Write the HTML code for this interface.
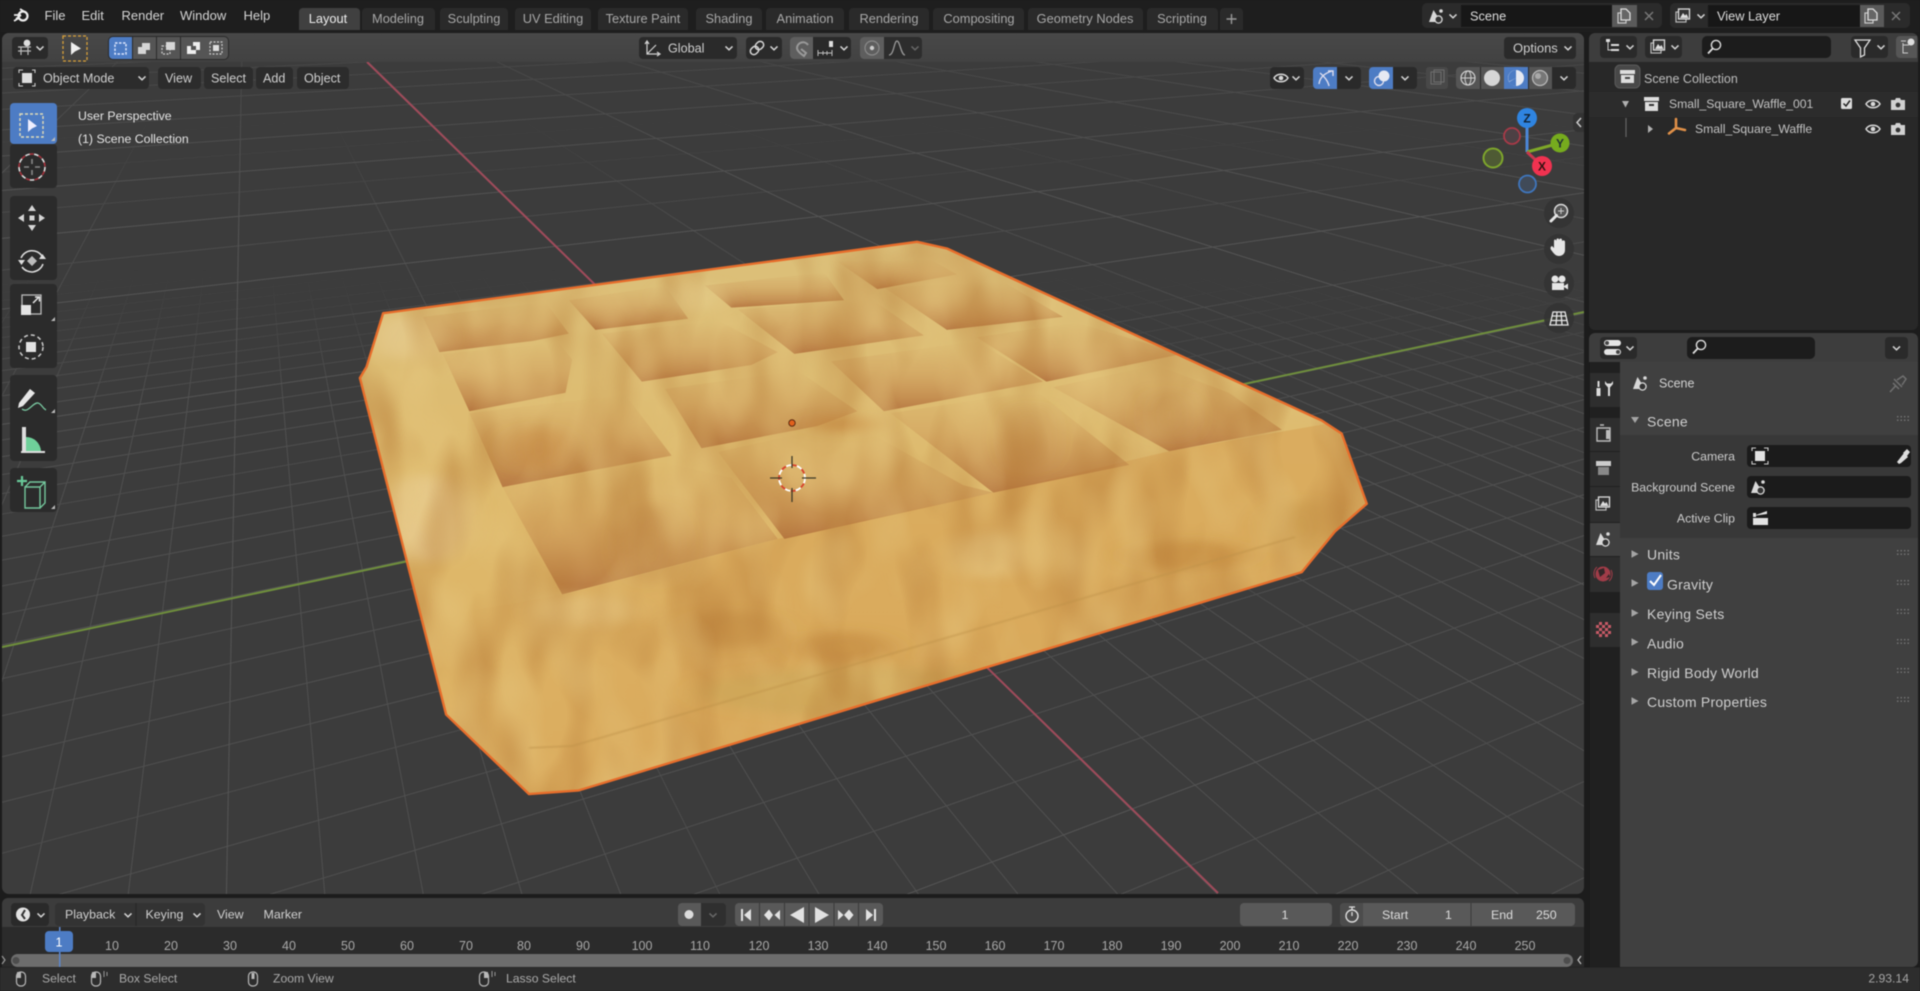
<!DOCTYPE html>
<html><head><meta charset="utf-8"><title>Blender</title>
<style>
html,body{margin:0;padding:0;background:#1b1b1b;width:1920px;height:991px;overflow:hidden}
svg{display:block;filter:blur(.45px)}
text{font-family:"Liberation Sans","DejaVu Sans",sans-serif;font-size:13px;fill:#d4d4d4}
.m{text-anchor:middle}.e{text-anchor:end}
.tab{fill:#a8a8a8;font-size:12.8px}
.hd{fill:#cfcfcf;font-size:12.6px}
.pn{fill:#cfcfcf;font-size:14px;letter-spacing:.25px}
.rl{fill:#a9a9a9;font-size:12.5px}
.k{fill:#2a2a2a}.g{fill:#555}
.f{fill:#d6d6d6}
</style></head><body>
<svg xmlns="http://www.w3.org/2000/svg" width="1920" height="991" viewBox="0 0 1920 991">
<defs>
<path id="chev" d="M-3.5-1.6 0 1.8 3.5-1.6" fill="none" stroke="#d2d2d2" stroke-width="1.5"/>
<g id="eye"><path d="M-7 0C-4-5 4-5 7 0 4 5-4 5-7 0Z" fill="none" stroke="#d8d8d8" stroke-width="1.5"/><circle r="2.3" fill="#d8d8d8"/></g>
<g id="cam"><path d="M-7-4H-3L-2-6H2L3-4H7V6H-7Z" fill="#d0d0d0"/><circle cy="1" r="2.4" fill="#333"/></g>
<g id="scn"><path d="M-7 6-2.5-6 2 1-1 6Z" fill="#d8d8d8"/><circle cx="2.5" cy="3.5" r="3.6" fill="#333" stroke="#d8d8d8" stroke-width="1.3"/><circle cx="5" cy="-5" r="1.8" fill="#d8d8d8"/></g>
<g id="lay"><rect x="-7" y="-4" width="10" height="10" fill="none" stroke="#bbb" stroke-width="1.2"/><rect x="-4.5" y="-7" width="11" height="10" fill="#333" stroke="#ddd" stroke-width="1.3"/><path d="M-3 2 0-3 2-.5 3.5-2 5.5 2Z" fill="#ddd"/></g>
<g id="cop"><rect x="-6" y="-3" width="8" height="10" fill="none" stroke="#ccc" stroke-width="1.2"/><path d="M-3-7H2L6-3V4H-3Z" fill="#666" stroke="#ddd" stroke-width="1.3"/></g>
<g id="mag"><circle cx="2" cy="-2" r="4.6" fill="none" stroke="#ddd" stroke-width="1.4"/><path d="M-1.2 1.4-6 6.5" stroke="#ddd" stroke-width="1.8"/></g>
<g id="mouse"><rect x="-4.5" y="-7" width="9" height="14" rx="4" fill="none" stroke="#b8b8b8" stroke-width="1.2"/></g>
<g id="grip" fill="#777"><rect x="0" y="0" width="1.4" height="1.4"/><rect x="3.5" y="0" width="1.4" height="1.4"/><rect x="7" y="0" width="1.4" height="1.4"/><rect x="10.500" y="0" width="1.4" height="1.4"/><rect x="0" y="3.500" width="1.4" height="1.4"/><rect x="3.5" y="3.500" width="1.4" height="1.4"/><rect x="7" y="3.500" width="1.4" height="1.4"/><rect x="10.500" y="3.500" width="1.400" height="1.4"/></g>
<path id="tri" d="M-3.500-3.800 3.500 0-3.500 3.800Z" fill="#a5a5a5"/>
<clipPath id="vp"><rect x="2" y="33" width="1582" height="861" rx="7"/></clipPath>
<clipPath id="wc"><polygon transform="translate(340 230) scale(.6633 .3699)" points="65,225 870,32 915,50 1480,515 1510,550 1548,740 1500,815 1450,925 360,1515 285,1525 160,1310 30,400 40,370"/></clipPath>
<linearGradient id="hdg" x1="0" y1="0" x2="0" y2="1"><stop offset="0" stop-color="#484848"/><stop offset="1" stop-color="#424242"/></linearGradient>
<linearGradient id="mf" gradientUnits="userSpaceOnUse" x1="0" y1="270" x2="0" y2="400"><stop offset="0" stop-color="#000"/><stop offset="1" stop-color="#fff"/></linearGradient>
<mask id="mm" maskUnits="userSpaceOnUse" x="0" y="0" width="1920" height="991"><rect width="1920" height="991" fill="url(#mf)"/></mask>
<linearGradient id="mf2" gradientUnits="userSpaceOnUse" x1="0" y1="110" x2="0" y2="220"><stop offset="0" stop-color="#000"/><stop offset="1" stop-color="#fff"/></linearGradient>
<mask id="mm2" maskUnits="userSpaceOnUse" x="0" y="0" width="1920" height="991"><rect width="1920" height="991" fill="url(#mf2)"/></mask>
<linearGradient id="topf" x1="0" y1="0" x2="0" y2="1"><stop offset="0" stop-color="#3c3c3c" stop-opacity=".55"/><stop offset="1" stop-color="#3c3c3c" stop-opacity="0"/></linearGradient>
<linearGradient id="wb" x1="0" y1="0" x2="0" y2="1"><stop offset="0" stop-color="#dcc07a"/><stop offset=".5" stop-color="#dfba6c"/><stop offset="1" stop-color="#dcae60"/></linearGradient>
<linearGradient id="wl" x1="0" y1="0" x2="0" y2="1"><stop offset="0" stop-color="#c68a4e" stop-opacity="0"/><stop offset=".4" stop-color="#c68a4e" stop-opacity=".3"/><stop offset=".8" stop-color="#bb7d44" stop-opacity=".7"/><stop offset="1" stop-color="#b3723e" stop-opacity=".92"/></linearGradient>
<linearGradient id="ff" x1="0" y1="0" x2="1" y2="0"><stop offset="0" stop-color="#d8a658" stop-opacity="0"/><stop offset=".3" stop-color="#d8a658" stop-opacity=".7"/></linearGradient>
<filter id="bl" x="-30%" y="-30%" width="160%" height="160%"><feGaussianBlur stdDeviation="22 13"/></filter>
<filter id="bs" x="-10%" y="-10%" width="120%" height="120%"><feGaussianBlur stdDeviation="1.6"/></filter>
<filter id="md" x="0" y="0" width="1" height="1" color-interpolation-filters="sRGB"><feTurbulence type="fractalNoise" baseFrequency=".022 .009" numOctaves="2" seed="7"/><feColorMatrix values="0 0 0 0 .70  0 0 0 0 .46  0 0 0 0 .20  1.2 0 0 0 -.49"/></filter>
<filter id="ml" x="0" y="0" width="1" height="1" color-interpolation-filters="sRGB"><feTurbulence type="fractalNoise" baseFrequency=".02 .012" numOctaves="2" seed="23"/><feColorMatrix values="0 0 0 0 .90  0 0 0 0 .78  0 0 0 0 .50  0 1.2 0 0 -.53"/></filter>
</defs>

<rect width="1920" height="991" fill="#1c1c1c"/>

<!-- 3D viewport -->
<g clip-path="url(#vp)">
<rect x="2" y="33" width="1582" height="861" fill="#3c3c3c"/>
<g id="gmin" stroke="#505050" stroke-width="1" mask="url(#mm)"></g>
<g id="gmid" stroke="#4c4c4c" stroke-width="1" mask="url(#mm2)"></g>
<g id="gmaj" stroke="#555" stroke-width="1"></g>
<rect x="2" y="62" width="1582" height="150" fill="url(#topf)"/>
<path d="M367 62 1218 893" stroke="#a04a5a" stroke-width="2"/>
<path d="M0 647.500 1584 312" stroke="#6f8f3c" stroke-width="2"/>

<!-- waffle -->
<polygon transform="translate(340 230) scale(.6633 .3699)" points="65,225 870,32 915,50 1480,515 1510,550 1548,740 1500,815 1450,925 360,1515 285,1525 160,1310 30,400 40,370" fill="url(#wb)"/>
<g clip-path="url(#wc)">
<g transform="translate(340 230) scale(.6633 .3699)">
 <polygon points="160,1040 340,985 660,835 985,710 1250,598 1500,520 1548,740 1450,925 360,1515 285,1525 160,1310" fill="url(#ff)"/>
 <g fill="url(#wl)">
 <polygon points="245,695 480,625 590,670 660,835 335,985"/>
 <polygon points="570,600 720,540 790,540 940,690 985,710 670,835"/>
 <polygon points="830,495 1050,435 1190,635 985,710"/>
 <polygon points="1075,425 1230,365 1340,440 1420,540 1250,598"/>
 <polygon points="195,495 430,445 500,610 245,695"/>
 <polygon points="490,430 690,380 780,490 720,530 545,590"/>
 <polygon points="740,355 960,300 1060,410 820,490"/>
 <polygon points="960,290 1110,250 1270,335 1065,410"/>
 <polygon points="155,335 330,305 350,350 340,440 195,490"/>
 <polygon points="395,280 570,245 660,330 620,365 455,410"/>
 <polygon points="600,215 800,185 880,285 685,335"/>
 <polygon points="820,155 1000,140 1090,235 915,270"/>
 <polygon points="125,235 310,195 345,280 290,300 150,330"/>
 <polygon points="345,190 490,150 525,240 385,270"/>
 <polygon points="550,150 730,115 760,190 590,210"/>
 <polygon points="750,85 890,80 930,120 810,160"/>
 </g>
 <g filter="url(#bl)">
  <ellipse cx="130" cy="780" rx="60" ry="120" fill="#edd6a4" opacity=".55"/>
  <ellipse cx="95" cy="290" rx="45" ry="60" fill="#e8cf96" opacity=".6"/>
  <ellipse cx="370" cy="1030" rx="70" ry="40" fill="#ebcf92" opacity=".4"/>
  <ellipse cx="980" cy="880" rx="60" ry="60" fill="#e8cf92" opacity=".4"/>
  <ellipse cx="535" cy="180" rx="35" ry="40" fill="#e8d292" opacity=".6"/>
  <ellipse cx="760" cy="1130" rx="70" ry="45" fill="#bd8238" opacity=".5"/>
  <ellipse cx="590" cy="1080" rx="70" ry="50" fill="#c08a40" opacity=".45"/>
  <ellipse cx="1280" cy="880" rx="90" ry="40" fill="#bf8438" opacity=".5"/>
  <ellipse cx="1450" cy="800" rx="50" ry="70" fill="#c89a4a" opacity=".45"/>
  <ellipse cx="300" cy="590" rx="40" ry="60" fill="#c88a42" opacity=".5"/>
  <ellipse cx="760" cy="525" rx="50" ry="22" fill="#c98c44" opacity=".65"/>
  <ellipse cx="470" cy="850" rx="36" ry="110" fill="#bd8648" opacity=".45"/>
  <ellipse cx="1040" cy="560" rx="25" ry="90" fill="#bd8648" opacity=".4"/>
  <ellipse cx="1250" cy="500" rx="25" ry="70" fill="#b98040" opacity=".45"/>
  <ellipse cx="800" cy="1250" rx="260" ry="70" fill="#c8a558" opacity=".5"/>
 </g>
</g>
<rect x="340" y="230" width="1040" height="580" filter="url(#md)" fill="#000"/>
<rect x="340" y="230" width="1040" height="580" filter="url(#ml)" fill="#000"/>
</g>
<g transform="translate(340 230) scale(.6633 .3699)" fill="none">
 <path d="M285 1400 350 1395 1440 830" stroke="#bd9148" stroke-width="2" vector-effect="non-scaling-stroke" opacity=".45" filter="url(#bs)"/>
 <polygon points="65,225 870,32 915,50 1480,515 1510,550 1548,740 1500,815 1450,925 360,1515 285,1525 160,1310 30,400 40,370" stroke="#e76d2b" stroke-width="2.4" vector-effect="non-scaling-stroke" stroke-linejoin="round"/>
</g>
<!-- origin + 3d cursor -->
<circle cx="792" cy="423" r="3.2" fill="#e2611c" stroke="#5a2a10" stroke-width="1"/>
<circle cx="792" cy="478" r="13" fill="none" stroke="#fff" stroke-width="1.8" stroke-dasharray="6 5"/>
<circle cx="792" cy="478" r="13" fill="none" stroke="#d8402c" stroke-width="1.8" stroke-dasharray="5 6" stroke-dashoffset="5.500"/>
<path d="M792 456V468M792 488V502M770 478H782M802 478H816" stroke="#3c3a28" stroke-width="1.300"/>
</g>

<!-- viewport header -->
<path d="M2 62V40a7 7 0 0 1 7-7H1577a7 7 0 0 1 7 7V62Z" fill="url(#hdg)"/>

<!-- topbar -->
<rect width="1920" height="32" fill="#1e1e1e"/>
<g transform="translate(22 16)"><circle cx="1" r="4.500" fill="none" stroke="#ededed" stroke-width="2.200"/><path d="M-8-1H-1M-6 3-1-1M-8 5-3 2M-2-7 3-4" stroke="#ededed" stroke-width="1.800" fill="none"/></g>
<text x="44.500" y="20">File</text><text x="81.500" y="20">Edit</text><text x="121.500" y="20">Render</text><text x="180" y="20">Window</text><text x="243.500" y="20">Help</text>
<path d="M299 30V12a4 4 0 0 1 4-4H356a4 4 0 0 1 4 4V30Z" fill="#404040"/>
<g fill="#2a2a2a">
<path d="M362 30V12a4 4 0 0 1 4-4H431a4 4 0 0 1 4 4V30Z"/>
<path d="M440 30V12a4 4 0 0 1 4-4H504a4 4 0 0 1 4 4V30Z"/>
<path d="M515 30V12a4 4 0 0 1 4-4H587a4 4 0 0 1 4 4V30Z"/>
<path d="M598 30V12a4 4 0 0 1 4-4H684a4 4 0 0 1 4 4V30Z"/>
<path d="M696 30V12a4 4 0 0 1 4-4H758a4 4 0 0 1 4 4V30Z"/>
<path d="M766 30V12a4 4 0 0 1 4-4H840a4 4 0 0 1 4 4V30Z"/>
<path d="M849 30V12a4 4 0 0 1 4-4H925a4 4 0 0 1 4 4V30Z"/>
<path d="M933 30V12a4 4 0 0 1 4-4H1020a4 4 0 0 1 4 4V30Z"/>
<path d="M1028 30V12a4 4 0 0 1 4-4H1139a4 4 0 0 1 4 4V30Z"/>
<path d="M1147 30V12a4 4 0 0 1 4-4H1214a4 4 0 0 1 4 4V30Z"/>
<path d="M1220 30V12a4 4 0 0 1 4-4H1239a4 4 0 0 1 4 4V30Z"/>
</g>
<text class="tab m" x="328" y="23" style="fill:#eee">Layout</text>
<text class="tab m" x="398" y="23">Modeling</text>
<text class="tab m" x="474" y="23">Sculpting</text>
<text class="tab m" x="553" y="23">UV Editing</text>
<text class="tab m" x="643" y="23">Texture Paint</text>
<text class="tab m" x="729" y="23">Shading</text>
<text class="tab m" x="805" y="23">Animation</text>
<text class="tab m" x="889" y="23">Rendering</text>
<text class="tab m" x="979" y="23">Compositing</text>
<text class="tab m" x="1085" y="23">Geometry Nodes</text>
<text class="tab m" x="1182" y="23">Scripting</text>
<path d="M1231.500 14V24M1226.500 19H1236.500" stroke="#999" stroke-width="1.400"/>

<!-- scene selector -->
<rect x="1422" y="3" width="240" height="25" rx="5" fill="#2b2b2b"/>
<rect x="1461" y="5" width="151" height="22" fill="#171717"/>
<rect x="1612" y="5" width="25" height="22" fill="#5a5a5a"/>
<use href="#scn" x="1436" y="16"/><use href="#chev" x="1453" y="16"/>
<text x="1470" y="20.500" style="fill:#ddd;font-size:12.800px">Scene</text>
<use href="#cop" x="1624" y="16"/>
<path d="M1645 12 1653 20M1653 12 1645 20" stroke="#777" stroke-width="1.500"/>
<rect x="1670" y="3" width="240" height="25" rx="5" fill="#2b2b2b"/>
<rect x="1708" y="5" width="152" height="22" fill="#171717"/>
<rect x="1860" y="5" width="24" height="22" fill="#5a5a5a"/>
<use href="#lay" x="1683" y="16"/><use href="#chev" x="1701" y="16"/>
<text x="1717" y="20.500" style="fill:#ddd;font-size:12.800px">View Layer</text>
<use href="#cop" x="1871" y="16"/>
<path d="M1892 12 1900 20M1900 12 1892 20" stroke="#777" stroke-width="1.500"/>

<!-- header row 1 -->
<rect x="12" y="37" width="36" height="22" rx="4" class="k"/>
<g transform="translate(25 48)"><path d="M-7 3H6M-7-1H6M-4-1V7M3-1V7" stroke="#bbb" stroke-width="1.200" fill="none"/><circle cx="2" cy="-5" r="3.400" fill="#ddd"/></g>
<use href="#chev" x="40" y="48"/>
<rect x="63" y="36" width="24" height="25" fill="none" stroke="#d8a03a" stroke-width="1.300" stroke-dasharray="3 2"/>
<path d="M71 42V55L75 51.500 81 48.500Z" fill="#eee"/>
<rect x="108" y="36" width="121" height="24" rx="5" fill="#2a2a2a"/>
<path d="M109 41a4 4 0 0 1 4-4H132V59H113a4 4 0 0 1-4-4Z" fill="#4d7cc4"/>
<rect x="133" y="37" width="23" height="22" class="g"/><rect x="157" y="37" width="23" height="22" class="g"/><rect x="181" y="37" width="23" height="22" class="g"/>
<path d="M204 37H224a4 4 0 0 1 4 4V55a4 4 0 0 1-4 4H204Z" class="g"/>
<rect x="115" y="43" width="11" height="11" fill="none" stroke="#dfe8ff" stroke-width="1.400" stroke-dasharray="2.500 1.500"/>
<path d="M138 54V47H142V43H150V50H146V54Z" class="f"/>
<rect x="162" y="46" width="8" height="8" fill="none" stroke="#ccc" stroke-width="1.200" stroke-dasharray="2 1.500"/><rect x="166" y="42" width="9" height="8" class="f"/>
<path d="M187 46h6v-4h7v8h-4v4h-9Z" fill="#eee"/><rect x="191" y="46" width="5" height="4" fill="#555"/>
<rect x="210" y="42" width="12" height="12" fill="none" stroke="#ccc" stroke-width="1.200" stroke-dasharray="2 1.500"/><rect x="213" y="45" width="6" height="6" fill="#ddd"/>

<rect x="639" y="37" width="98" height="22" rx="4" class="k"/>
<g stroke="#d0d0d0" fill="none" stroke-width="1.200"><path d="M647 42V54H659M647 54 656 45M645 44 647 41 649 44M657 52 660 54 657 56"/></g>
<text x="668" y="52.500" class="hd">Global</text><use href="#chev" x="729" y="48"/>
<rect x="746" y="37" width="36" height="22" rx="4" class="k"/>
<g transform="translate(757 48) rotate(-45)" fill="none" stroke="#d6d6d6" stroke-width="1.500"><rect x="-8" y="-3.500" width="9" height="7" rx="3.500"/><rect x="-1" y="-3.500" width="9" height="7" rx="3.500"/></g><use href="#chev" x="774" y="48"/>
<rect x="790" y="37" width="61" height="22" rx="4" class="k"/>
<path d="M790 41a4 4 0 0 1 4-4H813V59H794a4 4 0 0 1-4-4Z" fill="#5e5e5e"/>
<path d="M797 48a6 6 0 0 1 11-3M797 48c0 3 4 6 7 8l2-3-5-4" fill="none" stroke="#999" stroke-width="2"/>
<path d="M818 53H832M818 50V56M832 50V56M823 51V55M827 51V55" stroke="#bbb"/><rect x="829" y="41" width="4" height="6" fill="#ddd"/>
<use href="#chev" x="844" y="48"/>
<rect x="860" y="37" width="62" height="22" rx="4" fill="#2d2d2d"/>
<path d="M860 41a4 4 0 0 1 4-4H884V59H864a4 4 0 0 1-4-4Z" fill="#5e5e5e"/>
<circle cx="872" cy="48" r="7" fill="none" stroke="#8a8a8a" stroke-width="1.200"/><circle cx="872" cy="48" r="2.200" fill="#ccc"/>
<path d="M889 55C894 55 894 41 897 41 900 41 901 55 905 55" fill="none" stroke="#999" stroke-width="1.300"/>
<use href="#chev" x="915" y="48" opacity=".35"/>
<rect x="1504" y="37" width="72" height="22" rx="4" class="k"/>
<text x="1513" y="52.500" style="fill:#cfcfcf">Options</text><use href="#chev" x="1568" y="48"/>

<!-- header row 2 -->
<g fill="#2c2c2c">
<rect x="13" y="67" width="136" height="22" rx="4"/><rect x="158" y="67" width="43" height="22" rx="4"/><rect x="204" y="67" width="49" height="22" rx="4"/><rect x="256" y="67" width="37" height="22" rx="4"/><rect x="297" y="67" width="52" height="22" rx="4"/>
</g>
<rect x="22" y="73" width="10" height="10" fill="#ddd"/><path d="M19 73V70H23M32 70H35V73M35 83V86H32M23 86H19V83" fill="none" stroke="#ccc" stroke-width="1.100"/>
<text x="43" y="82.500" class="hd">Object Mode</text><use href="#chev" x="142" y="78"/>
<text x="165" y="82.500" class="hd">View</text><text x="211" y="82.500" class="hd">Select</text><text x="263" y="82.500" class="hd">Add</text><text x="304" y="82.500" class="hd">Object</text>

<rect x="1270" y="67" width="34" height="22" rx="4" class="k"/><use href="#eye" x="1281" y="78"/><use href="#chev" x="1296" y="78"/>
<rect x="1313" y="67" width="48" height="22" rx="4" class="k"/>
<path d="M1313 71a4 4 0 0 1 4-4H1337V89H1317a4 4 0 0 1-4-4Z" fill="#4d7cc4"/>
<path d="M1319 84C1320 76 1326 73 1332 71M1328 71H1333V76M1320 73C1324 76 1328 81 1329 86" fill="none" stroke="#dde" stroke-width="1.400"/><use href="#chev" x="1349" y="78"/>
<rect x="1369" y="67" width="48" height="22" rx="4" class="k"/>
<path d="M1369 71a4 4 0 0 1 4-4H1393V89H1373a4 4 0 0 1-4-4Z" fill="#4d7cc4"/>
<circle cx="1379" cy="81" r="4.500" fill="none" stroke="#dde" stroke-width="1.400"/><circle cx="1384" cy="76" r="5.500" fill="#e6e9f2"/><use href="#chev" x="1405" y="78"/>
<rect x="1426" y="67" width="22" height="22" rx="3" fill="#484848"/><rect x="1431" y="72" width="10" height="12" fill="none" stroke="#6e6e6e"/><rect x="1434" y="70" width="10" height="12" fill="none" stroke="#6e6e6e"/>
<rect x="1456" y="67" width="120" height="22" rx="4" class="k"/>
<path d="M1456 71a4 4 0 0 1 4-4H1480V89H1460a4 4 0 0 1-4-4Z" class="g"/><rect x="1481" y="67" width="23" height="22" class="g"/><rect x="1504" y="67" width="24" height="22" fill="#4d7cc4"/><rect x="1529" y="67" width="23" height="22" class="g"/>
<circle cx="1468" cy="78" r="7" fill="none" stroke="#cfcfcf" stroke-width="1.200"/><ellipse cx="1468" cy="78" rx="3" ry="7" fill="none" stroke="#cfcfcf"/><path d="M1461 78H1475" stroke="#cfcfcf"/>
<circle cx="1492" cy="78" r="8" fill="#d6d6d6"/>
<circle cx="1516" cy="78" r="8" fill="#e6e9f2"/><path d="M1516 78V70a8 8 0 0 0-7 11.500Z" fill="#4d7cc4"/><path d="M1516 78 1509 82a8 8 0 0 0 7 4Z" fill="#4d7cc4"/>
<circle cx="1540" cy="78" r="7.500" fill="#777" stroke="#bbb" stroke-width="1.200"/><circle cx="1538" cy="76" r="3" fill="#aaa"/>
<use href="#chev" x="1564" y="78"/>

<text x="78" y="120" style="fill:#e6e6e6;font-size:12.300px">User Perspective</text>
<text x="78" y="143" style="fill:#e6e6e6;font-size:12.300px">(1) Scene Collection</text>

<!-- toolbar -->
<g fill="#2b2b2b">
<rect x="10" y="144" width="47" height="44" rx="4"/>
<rect x="10" y="196" width="47" height="84" rx="4"/><rect x="10" y="284" width="47" height="84" rx="4"/>
<rect x="10" y="375" width="47" height="86" rx="4"/><rect x="10" y="468" width="47" height="44" rx="4"/>
</g>
<rect x="10" y="103" width="47" height="41" rx="4" fill="#4d7cc4"/>
<rect x="20" y="114" width="23" height="23" fill="none" stroke="#e3ddb8" stroke-width="1.400" stroke-dasharray="3 2"/>
<path d="M28 119V132L32 128.500 37 126Z" fill="#eef"/>
<circle cx="32" cy="167" r="13" fill="none" stroke="#ddd" stroke-width="1.600" stroke-dasharray="5 4"/><circle cx="32" cy="167" r="13" fill="none" stroke="#a8323c" stroke-width="1.600" stroke-dasharray="4 5" stroke-dashoffset="4.500"/>
<path d="M32 159V164M32 170V175M24 167H29M35 167H40" stroke="#888" stroke-width="1.600"/>
<g class="f"><path d="M32 205 36 211H28ZM32 231 36 225H28ZM18 218 24 214V222ZM45 218 39 214V222Z"/><rect x="29.500" y="215.500" width="5" height="5"/></g>
<path d="M21 258A12 12 0 0 1 42 256M43 264A12 12 0 0 1 22 267" fill="none" stroke="#ddd" stroke-width="1.500"/><path d="M32 256 37 261 32 266 27 261Z" fill="#bbb"/><path d="M18 260H25L21.500 265ZM39 259H46L42.500 254Z" fill="#ddd"/>
<rect x="22" y="295" width="19" height="19" fill="none" stroke="#bbb" stroke-width="1.300"/><rect x="21" y="305" width="10" height="10" fill="#e3e3e3"/><path d="M33 303 39 297M35 297H39.500V301.500" fill="none" stroke="#e3e3e3" stroke-width="1.500"/>
<circle cx="31" cy="347" r="12" fill="none" stroke="#ccc" stroke-width="1.500" stroke-dasharray="4 3"/><rect x="26" y="342" width="10" height="10" fill="#e3e3e3"/>
<path d="M19 403 30 389 35 393 23 406 18 408Z" fill="#e6e6e6"/><path d="M22 409C28 414 33 402 38 403 42 404 42 408 46 410" fill="none" stroke="#79c7a0" stroke-width="1.300"/>
<path d="M22 427H26V451H22Z" fill="#ddd"/><path d="M26 451V437A15 15 0 0 1 41 451Z" fill="#6fd09a"/><path d="M21 452H45" stroke="#ddd" stroke-width="2"/>
<path d="M17 481H27M22 476V486" stroke="#68c898" stroke-width="2.200"/>
<path d="M25 487V508H40V487ZM25 487 30 482H45V503L40 508M40 487 45 482" fill="none" stroke="#74c79d" stroke-width="1.400"/>
<path d="M55 141 51 141 55 137ZM55 321 51 321 55 317ZM55 413 51 413 55 409ZM55 509 51 509 55 505Z" fill="#bbb"/>

<!-- gizmo -->
<path d="M1527 152V118" stroke="#4b86d6" stroke-width="3"/><path d="M1527 152 1560 143" stroke="#7fa828" stroke-width="3"/><path d="M1527 152 1542 166" stroke="#c8384e" stroke-width="3"/>
<circle cx="1512" cy="136" r="8" fill="#4d4044" stroke="#a83a48" stroke-width="1.800"/>
<circle cx="1493" cy="158" r="9.500" fill="#4e5a34" stroke="#7ea62c" stroke-width="2"/>
<circle cx="1527.500" cy="184" r="8.500" fill="#404a58" stroke="#3f76bd" stroke-width="1.800"/>
<circle cx="1527" cy="118" r="10" fill="#2f84e0"/><text class="m" x="1527" y="122.500" style="fill:#123;font-size:12px;font-weight:bold">Z</text>
<circle cx="1560" cy="143" r="9.500" fill="#76ab1e"/><text class="m" x="1560" y="147.500" style="fill:#233;font-size:12px;font-weight:bold">Y</text>
<circle cx="1542" cy="166" r="10" fill="#f03250"/><text class="m" x="1542" y="170.500" style="fill:#311;font-size:12px;font-weight:bold">X</text>
<path d="M1584 113H1578a5 5 0 0 0-5 5V127a5 5 0 0 0 5 5H1584Z" fill="#333"/><path d="M1581 118 1577 122.500 1581 127" fill="none" stroke="#ccc" stroke-width="1.500"/>
<g fill="#333" opacity=".9"><circle cx="1559" cy="213" r="15"/><circle cx="1559" cy="249" r="15"/><circle cx="1559" cy="283" r="15"/><circle cx="1559" cy="318" r="15"/></g>
<circle cx="1561" cy="211" r="6.500" fill="#555" stroke="#ddd" stroke-width="1.500"/><path d="M1556.500 215.500 1551 221" stroke="#e6e6e6" stroke-width="3" stroke-linecap="round"/><path d="M1561 208V214M1558 211H1564" stroke="#ccc"/>
<path d="M1552 251C1550 249 1550 247 1552 246L1554 248V241C1554 239 1556 239 1556.500 241V239.500C1557 238 1559 238 1559 240 1559.500 238 1562 238 1562 240V241C1563 240 1565 240 1565 242V250C1565 254 1562 256 1559 256 1556 256 1554 254 1552 251Z" fill="#e6e6e6"/>
<g fill="#e6e6e6"><circle cx="1555" cy="279" r="3.500"/><circle cx="1562" cy="279" r="3.500"/><rect x="1552" y="283" width="12" height="7"/><path d="M1564 286 1568 283.500V289.500L1564 287Z"/></g>
<path d="M1553 312H1565L1568 325H1550ZM1557 312 1556 325M1561 312 1562 325M1552 316H1566M1551 320.500H1567" fill="none" stroke="#e6e6e6" stroke-width="1.300"/>

<!-- outliner -->
<rect x="1589" y="33" width="329" height="297" rx="6" fill="#282828"/>
<path d="M1589 62V39a6 6 0 0 1 6-6H1912a6 6 0 0 1 6 6V62Z" fill="#3d3d3d"/>
<rect x="1589" y="92" width="329" height="25" fill="#2c2c2c"/>
<rect x="1600" y="36" width="37" height="22" rx="4" class="k"/>
<path d="M1606 39h4v3h-4ZM1611 44h8v2h-8ZM1611 49h8v2h-8Z" fill="#ddd"/><path d="M1608 42V50H1611" stroke="#ccc" fill="none"/><use href="#chev" x="1630" y="47"/>
<rect x="1645" y="36" width="37" height="22" rx="4" class="k"/><use href="#lay" x="1658" y="47"/><use href="#chev" x="1675" y="47"/>
<rect x="1702" y="36" width="129" height="22" rx="5" fill="#1c1c1c"/><use href="#mag" x="1714" y="47"/>
<rect x="1851" y="36" width="37" height="22" rx="4" class="k"/><path d="M1855 40H1870L1864.500 48V55L1860.500 57V48Z" fill="none" stroke="#ddd" stroke-width="1.300"/><use href="#chev" x="1881" y="47"/>
<path d="M1896 40a4 4 0 0 1 4-4H1917V58H1900a4 4 0 0 1-4-4Z" fill="#565656"/><path d="M1903 43V53H1908M1903 45H1909M1901 41H1906" stroke="#ccc" fill="none"/><circle cx="1911" cy="42" r="3.500" fill="#ddd"/>
<rect x="1615" y="65" width="25" height="23" rx="5" fill="#484848" stroke="#5b5b5b"/>
<rect x="1620" y="70" width="15" height="4" fill="#ddd"/><path d="M1621 75H1634V83H1621Z" fill="#ddd"/><rect x="1625" y="77" width="5" height="2" fill="#444"/>
<text x="1644" y="83" style="fill:#bdbdbd;font-size:12.500px">Scene Collection</text>
<path d="M1622 101H1629L1625.500 107.500Z" fill="#b0b0b0"/>
<rect x="1644" y="97" width="15" height="4" fill="#ddd"/><path d="M1645 102H1658V111H1645Z" fill="#ddd"/><rect x="1649" y="104" width="5" height="2" fill="#333"/>
<text x="1669" y="108" style="fill:#c2c2c2;font-size:12.200px">Small_Square_Waffle_001</text>
<rect x="1841" y="98" width="11" height="11" rx="1.500" fill="#dcdcdc"/><path d="M1843.500 103.500 1846 106 1850 100.500" fill="none" stroke="#222" stroke-width="1.500"/>
<use href="#eye" x="1873" y="104"/><use href="#cam" x="1898" y="104"/>
<path d="M1626 118V137" stroke="#666" stroke-width="1.200"/>
<path d="M1648 125 1653 129 1648 133Z" fill="#b0b0b0"/>
<path d="M1676 119V128M1676 128 1669 133.500M1676 128 1685 130" fill="none" stroke="#e09048" stroke-width="2.600" stroke-linecap="round"/>
<text x="1695" y="133" style="fill:#c2c2c2;font-size:12.200px">Small_Square_Waffle</text>
<use href="#eye" x="1873" y="129"/><use href="#cam" x="1898" y="129"/>

<!-- properties -->
<path d="M1589 362V339a6 6 0 0 1 6-6H1912a6 6 0 0 1 6 6V362Z" fill="#3d3d3d"/>
<rect x="1590" y="362" width="30" height="605" fill="#202020"/>
<path d="M1620 362H1918V961a6 6 0 0 1-6 6H1620Z" fill="#404040"/>
<rect x="1600" y="337" width="37" height="22" rx="4" class="k"/>
<rect x="1604" y="340" width="17" height="6" rx="3" fill="#e4e4e4"/><rect x="1604" y="349" width="17" height="6" rx="3" fill="#e4e4e4"/><circle cx="1607" cy="343" r="2" fill="#444"/><circle cx="1618" cy="352" r="2" fill="#444"/><use href="#chev" x="1630" y="348"/>
<rect x="1687" y="337" width="128" height="22" rx="5" fill="#1c1c1c"/><use href="#mag" x="1699" y="347"/>
<rect x="1885" y="337" width="23" height="22" rx="4" class="k"/><use href="#chev" x="1896.500" y="348"/>
<g fill="#2e2e2e">
<rect x="1590" y="373" width="30" height="34"/><rect x="1590" y="418" width="30" height="33"/><rect x="1590" y="452" width="30" height="34"/><rect x="1590" y="487" width="30" height="35"/>
<rect x="1590" y="557" width="30" height="35"/><rect x="1590" y="613" width="30" height="34"/>
</g>
<rect x="1590" y="523" width="30" height="33" fill="#404040"/>
<path d="M1596.500 388H1600.500V396H1596.500ZM1597.500 381H1599.500V387H1597.500Z" fill="#ddd"/><path d="M1605 381V384L1608 387.500V396H1610V387.500L1613 384V381L1611 383.500H1607Z" fill="#ddd"/>
<path d="M1597 428H1610V441H1597ZM1600 425H1604" fill="none" stroke="#bbb" stroke-width="1.400"/><rect x="1606" y="430" width="4" height="9" fill="#bbb"/>
<rect x="1596" y="461" width="15" height="5" fill="#ccc"/><rect x="1598" y="467" width="11" height="8" fill="#888"/>
<use href="#lay" x="1603" y="504"/>
<use href="#scn" x="1603" y="539"/>
<circle cx="1603" cy="574" r="7.500" fill="#a03c48"/><path d="M1598 570 1604 568 1605 573 1600 577ZM1606 578 1609 574 1610 577Z" fill="#332628"/><path d="M1595 578A9 9 0 0 1 1597 567M1611 570A9 9 0 0 1 1609 581" fill="none" stroke="#a03c48"/>
<rect x="1596" y="622" width="15" height="15" fill="#c65a66"/><path d="M1596 622h3v3h-3ZM1602 622h3v3h-3ZM1608 622h3v3h-3ZM1599 625h3v3h-3ZM1605 625h3v3h-3ZM1596 628h3v3h-3ZM1602 628h3v3h-3ZM1608 628h3v3h-3ZM1599 631h3v3h-3ZM1605 631h3v3h-3ZM1596 634h3v3h-3ZM1602 634h3v3h-3ZM1608 634h3v3h-3Z" fill="#2d2d2d"/>

<use href="#scn" x="1640" y="383"/>
<text x="1659" y="387.500" style="fill:#d2d2d2;font-size:12.500px">Scene</text>
<path d="M1890 392 1895.500 386M1894 379 1902 387M1897 380 1903 376 1906 379 1902 385M1893 383 1899 389" fill="none" stroke="#707070" stroke-width="1.500"/>
<path d="M1631 417H1639L1635 423Z" fill="#a5a5a5"/>
<text x="1647" y="426.500" class="pn">Scene</text><use href="#grip" x="1897" y="416"/>
<rect x="1620" y="435" width="298" height="103" fill="#383838"/>
<text class="e" x="1735" y="460.500" style="fill:#ccc;font-size:12.300px">Camera</text>
<text class="e" x="1735" y="491.500" style="fill:#ccc;font-size:12.300px">Background Scene</text>
<text class="e" x="1735" y="522.500" style="fill:#ccc;font-size:12.300px">Active Clip</text>
<rect x="1747" y="445" width="164" height="22" rx="4" fill="#1b1b1b"/><rect x="1747" y="476" width="164" height="22" rx="4" fill="#1b1b1b"/><rect x="1747" y="507" width="164" height="22" rx="4" fill="#1b1b1b"/>
<rect x="1755" y="451" width="10" height="10" fill="#e2e2e2"/><path d="M1752 451V448H1756M1764 448H1768V451M1768 461V464H1764M1756 464H1752V461" fill="none" stroke="#ccc" stroke-width="1.100"/>
<path d="M1899 464 1897 462 1904 453 1908 457 1901 463ZM1903 453 1907 449 1910 452 1907 456Z" fill="#ddd"/>
<use href="#scn" x="1758" y="487"/>
<rect x="1753" y="518" width="15" height="7" fill="#e2e2e2"/><path d="M1753 516 1767 511V514L1753 516Z" fill="#e2e2e2"/><rect x="1753" y="513" width="3" height="4" fill="#ddd"/>

<use href="#tri" x="1635" y="554"/><text x="1647" y="559.500" class="pn">Units</text><use href="#grip" x="1897" y="550"/>
<use href="#tri" x="1635" y="583"/><rect x="1647" y="572" width="16" height="18" rx="3" fill="#4d7cc4"/><path d="M1650 581 1654 585 1661 575" fill="none" stroke="#fff" stroke-width="2"/><text x="1667" y="589.500" class="pn">Gravity</text><use href="#grip" x="1897" y="580"/>
<use href="#tri" x="1635" y="613"/><text x="1647" y="619" class="pn">Keying Sets</text><use href="#grip" x="1897" y="609"/>
<use href="#tri" x="1635" y="642"/><text x="1647" y="648.500" class="pn">Audio</text><use href="#grip" x="1897" y="639"/>
<use href="#tri" x="1635" y="672"/><text x="1647" y="678" class="pn">Rigid Body World</text><use href="#grip" x="1897" y="668"/>
<use href="#tri" x="1635" y="701"/><text x="1647" y="707" class="pn">Custom Properties</text><use href="#grip" x="1897" y="697"/>

<!-- timeline -->
<path d="M2 967V904a6 6 0 0 1 6-6H1578a6 6 0 0 1 6 6V967Z" fill="#3c3c3c"/>
<rect x="2" y="927" width="1582" height="40" fill="#2b2b2b"/>
<rect x="11" y="903" width="38" height="23" rx="4" class="k"/>
<circle cx="23" cy="914.500" r="7" fill="#e2e2e2"/><path d="M25 910 22 915 25 919" stroke="#333" stroke-width="2" fill="none"/><use href="#chev" x="41" y="915"/>
<rect x="55" y="903" width="150" height="23" rx="4" fill="#333"/><path d="M136 903V926" stroke="#262626"/>
<text x="65" y="918.500" class="hd" style="font-size:12.400px">Playback</text><use href="#chev" x="128" y="915"/>
<text x="145.500" y="918.500" class="hd" style="font-size:12.400px">Keying</text><use href="#chev" x="197" y="915"/>
<text x="217" y="918.500" class="hd" style="font-size:12.400px">View</text><text x="263.500" y="918.500" class="hd" style="font-size:12.400px">Marker</text>
<rect x="678" y="903" width="48" height="23" rx="4" fill="#2f2f2f"/><path d="M678 907a4 4 0 0 1 4-4H701V926H682a4 4 0 0 1-4-4Z" fill="#595959"/>
<circle cx="689" cy="914.500" r="4.500" fill="#dcdcdc"/><use href="#chev" x="713" y="915" opacity=".35"/>
<rect x="735" y="903" width="148" height="23" rx="4" fill="#595959"/>
<path d="M759.500 903V926M784.500 903V926M809 903V926M834 903V926M858.500 903V926" stroke="#3a3a3a"/>
<g fill="#e2e2e2">
<path d="M741 909H743V921H741ZM751 909V921L744 915Z"/>
<path d="M764 915 769 909.500 773 915 769 920.500ZM780 910V920L774.500 915Z"/>
<path d="M804 907V923L790 915Z"/>
<path d="M815 907V923L829 915Z"/>
<path d="M838 910V920L843.500 915ZM844 915 849 909.500 853.500 915 849 920.500Z"/>
<path d="M866 909V921L873 915ZM874 909H876V921H874Z"/>
</g>
<rect x="1240" y="903" width="92" height="23" rx="4" fill="#595959"/><text class="m" x="1285" y="919" style="fill:#ddd;font-size:12.400px">1</text>
<rect x="1340" y="903" width="235" height="23" rx="4" fill="#595959"/><path d="M1340 907a4 4 0 0 1 4-4H1363V926H1344a4 4 0 0 1-4-4Z" fill="#4c4c4c"/><path d="M1471 903V926" stroke="#3a3a3a"/>
<circle cx="1352" cy="916" r="6" fill="none" stroke="#ddd" stroke-width="1.400"/><path d="M1349 907H1355M1352 907V910M1352 916V912" stroke="#ddd" stroke-width="1.300"/>
<text x="1382" y="919" style="fill:#ddd;font-size:12.400px">Start</text><text x="1445" y="919" style="fill:#ddd;font-size:12.400px">1</text>
<text x="1491" y="919" style="fill:#ddd;font-size:12.400px">End</text><text x="1536" y="919" style="fill:#ddd;font-size:12.400px">250</text>
<g>
<text class="rl m" x="112" y="950">10</text><text class="rl m" x="171" y="950">20</text><text class="rl m" x="230" y="950">30</text><text class="rl m" x="289" y="950">40</text><text class="rl m" x="348" y="950">50</text><text class="rl m" x="407" y="950">60</text><text class="rl m" x="466" y="950">70</text><text class="rl m" x="524" y="950">80</text><text class="rl m" x="583" y="950">90</text><text class="rl m" x="642" y="950">100</text><text class="rl m" x="700" y="950">110</text><text class="rl m" x="759" y="950">120</text><text class="rl m" x="818" y="950">130</text><text class="rl m" x="877" y="950">140</text><text class="rl m" x="936" y="950">150</text><text class="rl m" x="995" y="950">160</text><text class="rl m" x="1054" y="950">170</text><text class="rl m" x="1112" y="950">180</text><text class="rl m" x="1171" y="950">190</text><text class="rl m" x="1230" y="950">200</text><text class="rl m" x="1289" y="950">210</text><text class="rl m" x="1348" y="950">220</text><text class="rl m" x="1407" y="950">230</text><text class="rl m" x="1466" y="950">240</text><text class="rl m" x="1525" y="950">250</text>
</g>
<rect x="11" y="954" width="1562" height="13" rx="6.500" fill="#6d6d6d"/>
<circle cx="16" cy="960.500" r="3.500" fill="#4d4d4d"/><circle cx="1567" cy="960.500" r="3.500" fill="#4d4d4d"/>
<path d="M2 956 5 960 2 964" fill="none" stroke="#999" stroke-width="1.200"/><path d="M1581 956 1578 960 1581 964" fill="none" stroke="#bbb" stroke-width="1.300"/>
<rect x="59" y="927" width="1.500" height="40" fill="#5c86cc"/>
<rect x="45" y="931" width="28" height="21" rx="4" fill="#4d7cc4"/><text class="m" x="59" y="946.500" style="fill:#fff;font-size:12.500px">1</text>

<!-- status -->
<rect y="967.500" width="1920" height="23.500" fill="#2d2d2d"/>
<use href="#mouse" x="21" y="979"/><rect x="17" y="972" width="4" height="6" fill="#b8b8b8"/>
<text x="42" y="982.500" style="fill:#aaa;font-size:12.200px">Select</text>
<use href="#mouse" x="96" y="979"/><rect x="92" y="972" width="4" height="6" fill="#b8b8b8"/><path d="M104 971V977M107 972V976" stroke="#999"/>
<text x="119" y="982.500" style="fill:#aaa;font-size:12.200px">Box Select</text>
<use href="#mouse" x="253" y="979"/><rect x="251.500" y="973" width="3" height="6" fill="#b8b8b8"/>
<text x="273" y="982.500" style="fill:#aaa;font-size:12.200px">Zoom View</text>
<use href="#mouse" x="484" y="979"/><rect x="484" y="972" width="4" height="6" fill="#b8b8b8"/><path d="M492 971V977M495 972V976" stroke="#999"/>
<text x="506" y="982.500" style="fill:#aaa;font-size:12.200px">Lasso Select</text>
<text class="e" x="1909" y="982.500" style="fill:#a5a5a5;font-size:12.200px">2.93.14</text>
</svg>
<script>
(function(){
var a=.038,b=.0172,Vr=[244,-60],Vg=[3500,-88],O=[794,479],NS="http://www.w3.org/2000/svg";
var X0=0,X1=1586,Y0=30,Y1=896;
function P(u,v){var d=1+a*u+b*v;return[(a*u*Vr[0]+b*v*Vg[0]+O[0])/d,(a*u*Vr[1]+b*v*Vg[1]+O[1])/d];}
function L(g,p,q){
 var t0=0,t1=1,dx=q[0]-p[0],dy=q[1]-p[1],c=[[-dx,p[0]-X0],[dx,X1-p[0]],[-dy,p[1]-Y0],[dy,Y1-p[1]]],i;
 for(i=0;i<4;i++){var s=c[i][0],r=c[i][1];
  if(s===0){if(r<0)return;continue;}
  var t=r/s;
  if(s<0){if(t>t1)return;if(t>t0)t0=t;}else{if(t<t0)return;if(t<t1)t1=t;}
 }
 var l=document.createElementNS(NS,"line");
 l.setAttribute("x1",(p[0]+t0*dx).toFixed(1));l.setAttribute("y1",(p[1]+t0*dy).toFixed(1));
 l.setAttribute("x2",(p[0]+t1*dx).toFixed(1));l.setAttribute("y2",(p[1]+t1*dy).toFixed(1));
 g.appendChild(l);
}
var mn=document.getElementById("gmin"),md=document.getElementById("gmid"),mj=document.getElementById("gmaj"),k;
function G(k){return k%10==0?mj:(k%5==0?md:mn);}
for(k=-60;k<=130;k++){var v=(.1-1-a*k)/b;L(G(k),P(k,v),Vg);}
for(k=-120;k<=220;k++){var u=(.1-1-b*k)/a;L(G(k),P(u,k),Vr);}
})();
</script>
</body></html>
